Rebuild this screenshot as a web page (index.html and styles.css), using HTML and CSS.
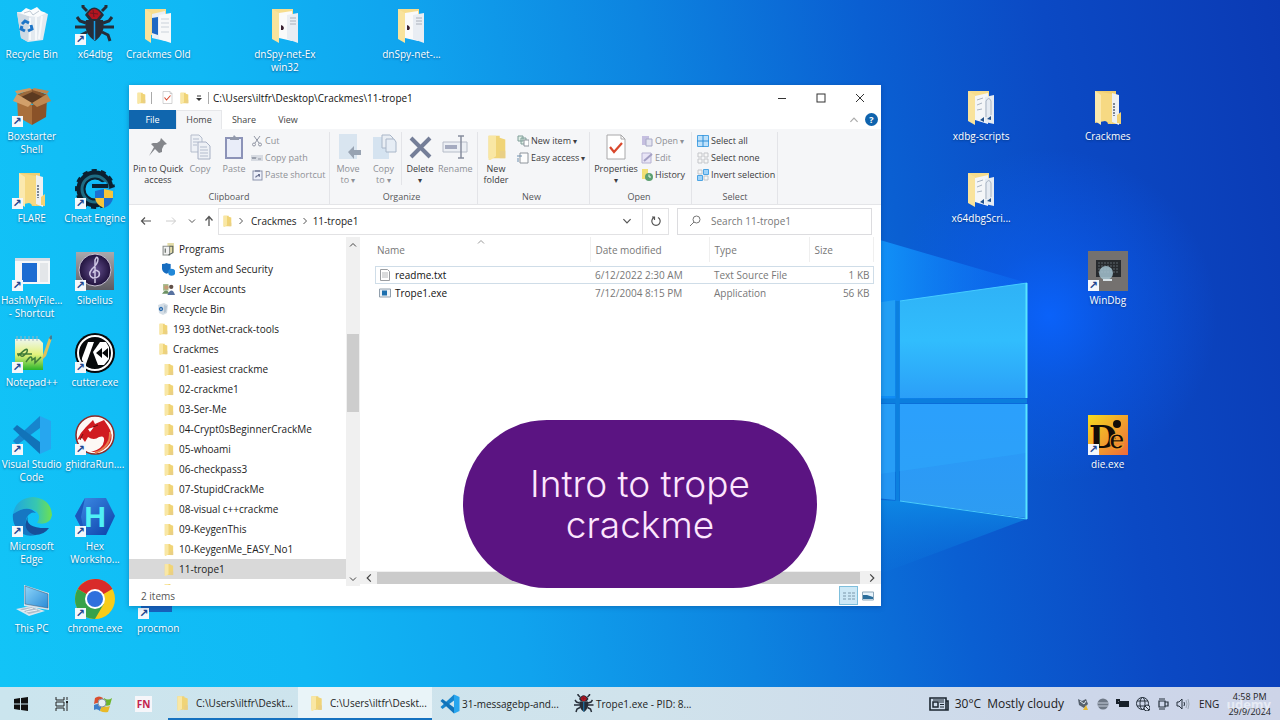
FILE: index.html
```html
<!DOCTYPE html>
<html lang="en">
<head>
<meta charset="utf-8">
<title>Desktop</title>
<link rel="stylesheet" href="styles.css">
</head>
<body>
<svg class="defs" aria-hidden="true">
  <defs>
    <linearGradient id="g-die" x1="0" y1="0" x2="1" y2="1"><stop offset="0" stop-color="#f6dc1e"/><stop offset="1" stop-color="#ee6a3a"/></linearGradient>
    <linearGradient id="g-sib" x1="0" y1="0" x2="0" y2="1"><stop offset="0" stop-color="#a9a9ad"/><stop offset="1" stop-color="#5d5b62"/></linearGradient>
    <radialGradient id="g-orb"><stop offset="0" stop-color="#65508f"/><stop offset="1" stop-color="#20123c"/></radialGradient>
    <linearGradient id="g-note" x1="0" y1="0" x2="0" y2="1"><stop offset="0" stop-color="#eef6ef"/><stop offset=".5" stop-color="#e4f27c"/><stop offset="1" stop-color="#2ab52a"/></linearGradient>
    <linearGradient id="g-edge" x1="0" y1="0" x2="1" y2="0"><stop offset="0" stop-color="#1fa6e0"/><stop offset=".6" stop-color="#37c7b0"/><stop offset="1" stop-color="#6fe04f"/></linearGradient>
    <linearGradient id="g-hex" x1="0" y1="0" x2="1" y2="1"><stop offset="0" stop-color="#3f8fe8"/><stop offset="1" stop-color="#0c3fa8"/></linearGradient>
    <linearGradient id="g-pc" x1="0" y1="0" x2="1" y2="1"><stop offset="0" stop-color="#8fd6fa"/><stop offset="1" stop-color="#2a8bd6"/></linearGradient>
    <linearGradient id="g-pane" x1="0" y1="0" x2="0" y2="1"><stop offset="0" stop-color="#2fb2f6"/><stop offset=".5" stop-color="#31bdfd"/><stop offset="1" stop-color="#2b9ff8"/></linearGradient>
    <linearGradient id="g-pane2" x1="0" y1="0" x2="0" y2="1"><stop offset="0" stop-color="#2a98fb"/><stop offset="1" stop-color="#2d9cf2"/></linearGradient>
    <linearGradient id="g-beam" x1="0" x2="1"><stop offset="0" stop-color="#1296fb" stop-opacity=".9"/><stop offset="1" stop-color="#0f7bff" stop-opacity=".2"/></linearGradient>
    <linearGradient id="g-beam2" x1="0" y1="0" x2="0" y2="1"><stop offset="0" stop-color="#0d8ae6" stop-opacity=".9"/><stop offset="1" stop-color="#0c76dc" stop-opacity=".1"/></linearGradient>

    <symbol id="folder" viewBox="0 0 12 14"><path d="M2 1H8V2L11 3V13H2Z" fill="#f0d477"/><path d="M2 1H6V12L3 14H2Z" fill="#f9e7a4"/><path d="M8 9H11V13H8Z" fill="#e9cf85"/></symbol>

    <symbol id="fold-blue" viewBox="0 0 40 40"><path d="M7 4H28V30H12Z" fill="#f7dd8d"/><path d="M14 9L27 6V36L14 33Z" fill="#e9eff5"/><path d="M14 13L20 12V30L14 28Z" fill="#1d68c4"/><path d="M21 10L33 8V38L21 34Z" fill="#f7f8f9"/><path d="M23 14H31M23 18H31M23 22H31M23 27H31" stroke="#cbd2da" stroke-width="1"/><path d="M7 4L13 8V38L7 34Z" fill="#f9e39c"/></symbol>
    <symbol id="fold-spy" viewBox="0 0 40 40"><path d="M7 4H28V30H12Z" fill="#f7dd8d"/><path d="M14 8L27 6V36L14 33Z" fill="#fafafa"/><path d="M22 10L33 8V38L22 34Z" fill="#e9edf3"/><path d="M25 13H31M25 16H31M25 19H31" stroke="#aab0ba"/><path d="M16 20L18 21L19 23L18 25L16 25Z" fill="#3a2030"/><path d="M7 4L14 8V38L7 34Z" fill="#f9e39c"/></symbol>
    <symbol id="fold-script" viewBox="0 0 40 40"><path d="M7 4H28V30H12Z" fill="#f7dd8d"/><path d="M14 9L27 6V37L14 33Z" fill="#f4f6f8"/><path d="M24 10L33 8V37L24 35Z" fill="#e5ebf2"/><path d="M16 13L22 11M16 18L21 16M16 23L21 22M25 30V14Q28 9 30 14V28" stroke="#a9b4c2" fill="none"/><path d="M19 33L23 30V35ZM26 32L30 29V33Z" fill="#24538c"/><path d="M7 4L14 8V38L7 34Z" fill="#f9e39c"/></symbol>
    <symbol id="fold-zip" viewBox="0 0 40 40"><path d="M7 4H28V8L31 9V27L33 28V37H20Z" fill="#f0ce71"/><path d="M24 6L31 8V38L24 35Z" fill="#eef0f2"/><path d="M26 16V29" stroke="#7d8694" stroke-width="2" stroke-dasharray="2 1"/><path d="M29 28L33 25V36H29Z" fill="#f3d272"/><path d="M7 4L24 7V37L17 34L7 36Z" fill="#f6d983"/><path d="M7 4L13 8V38L7 34Z" fill="#fbe9ae"/></symbol>

    <symbol id="recycle" viewBox="0 0 40 40"><path d="M5 7L31 7L36 9L31 35L16 37L9 33Z" fill="#e3eaf0"/><path d="M5 8L9 33L16 37L17 11Z" fill="#cfdae4"/><path d="M8 8L14 3L19 5L25 2L29 6L34 8L26 12L16 11Z" fill="#fafcfd"/><path d="M12 8L18 6L21 10L27 6" stroke="#bdc9d4" fill="none"/><path d="M18 13V35M24 12V35M30 11L27 34" stroke="#f6f9fb" stroke-width="2"/><g fill="none" stroke="#1d76c8" stroke-width="3"><path d="M10 19L13 16L17 18"/><path d="M19 20L20 24L16 26"/><path d="M13 26L9 24L10 21"/></g></symbol>
    <symbol id="bug" viewBox="0 0 40 40"><g fill="none" stroke="#262d38" stroke-width="3"><path d="M12 6L8 2V0M27 6L31 2V0"/><path d="M11 18L5 16L2 12M28 18L34 16L37 12M11 22H0M28 22H39M12 27L6 30L4 36M27 27L33 30L35 36"/></g><path d="M10 10Q19 -5 29 10L25 15H14Z" fill="#262d38"/><path d="M13 9Q19 -1 26 9L22 14H17Z" fill="#b51420"/><path d="M15 8L23 9M18 5L19 12" stroke="#6d1720"/><path d="M11 15H28Q31 28 20 36Q8 28 11 15Z" fill="#262d38"/><path d="M19.500 16V35" stroke="#189ee8" stroke-width="1.500"/></symbol>
    <symbol id="box" viewBox="0 0 40 40"><path d="M5 11L20 18V38L6 30Z" fill="#a9703c"/><path d="M20 18L35 11L34 30L20 38Z" fill="#8a5228"/><path d="M5 8L20 2L35 8L20 17Z" fill="#5c3a20"/><path d="M5 8L20 2V5L9 10Z" fill="#9c6a3c"/><path d="M35 8L20 2V5L31 10Z" fill="#84532c"/><path d="M5 7L1 14L16 20L20 16Z" fill="#d2a06a"/><path d="M35 7L39 14L25 20L20 16Z" fill="#bf8850"/><path d="M5 7L3 4L18 1L20 3Z" fill="#cf9a62"/><path d="M35 7L37 4L22 1L20 3Z" fill="#bd8650"/></symbol>
    <symbol id="cheat" viewBox="0 0 40 40"><circle cx="20" cy="20" r="14" fill="none" stroke="#0b2030" stroke-width="9"/><circle cx="20" cy="20" r="18" fill="none" stroke="#0b2030" stroke-width="4" stroke-dasharray="5 4"/><circle cx="20" cy="20" r="13" fill="none" stroke="#1e6c84" stroke-width="3"/><path d="M12 14L31 13L34 20L40 18V28H26L22 21Z" fill="#10b3f6"/><path d="M17 15H33V19H17Z" fill="#0b2030"/><path d="M20 22L29 20V29H20Z" fill="#1c6fd0"/><path d="M29 20L38 22V29H29Z" fill="#f6c53c"/><path d="M20 29H29V39Q21 36 20 29Z" fill="#f6c53c"/><path d="M29 29H38Q37 36 29 39Z" fill="#1c6fd0"/></symbol>
    <symbol id="hash" viewBox="0 0 40 40"><rect x="3" y="7" width="35" height="26" fill="#f6f7f8"/><path d="M3 7H38V10H3Z" fill="#d5dde6"/><rect x="10" y="12" width="15" height="19" fill="#1c6cd2"/><rect x="28" y="12" width="8" height="19" fill="#e3e6e9"/></symbol>
    <symbol id="sibelius" viewBox="0 0 40 40"><rect x="1" y="1" width="38" height="38" fill="url(#g-sib)"/><circle cx="20" cy="19" r="16" fill="url(#g-orb)" stroke="#c6c0d2"/><path d="M20 32V9Q22 4 23 8Q23 13 17 18Q12 24 18 27Q26 27 24 21Q20 17 18 22" fill="none" stroke="#cfc7e4" stroke-width="1.500"/></symbol>
    <symbol id="notepad" viewBox="0 0 40 40"><path d="M3 6H27L31 10V37H3Z" fill="url(#g-note)"/><path d="M5 3V8M9 3V8M13 3V8M17 3V8M21 3V8M25 3V8" stroke="#a7b6ba"/><path d="M31 22L37 5L39 2L40 5L34 23L30 27Z" fill="#dfc15a"/><path d="M37 5L39 2L41 4L39 7Z" fill="#3f7c9c"/><path d="M6 23Q17 12 15 19Q9 27 8 20M5 21H20M14 29Q20 20 20 27L23 25V30L29 24" fill="none" stroke="#3e7b38" stroke-width="1.500"/></symbol>
    <symbol id="cutter" viewBox="0 0 40 40"><circle cx="20" cy="20" r="20" fill="#07090b"/><circle cx="20" cy="20" r="17" fill="none" stroke="#fff" stroke-width="2"/><path d="M13 9H19L11 31Q6 28 7 25Z" fill="#fff"/><path d="M18 19L25 9H31L34 14V26L29 32H23Z" fill="#fff"/><path d="M21 20L27 15V25ZM27 20L33 15V25Z" fill="#07090b"/></symbol>
    <symbol id="vscode" viewBox="0 0 40 40"><path d="M28 1L39 6V34L28 39Z" fill="#27a6ef"/><path d="M28 1V13L5 30L1 26Z" fill="#1785cd"/><path d="M28 39V27L5 10L1 14Z" fill="#1173b9"/></symbol>
    <symbol id="dragon" viewBox="0 0 40 40"><circle cx="20" cy="20" r="19" fill="#fdf8f5" stroke="#8d2a28" stroke-width="1.500"/><path d="M2 25Q5 18 11 12L18 5L20 9L29 5L33 11Q39 20 35 28Q29 38 16 37Q28 34 29 26Q30 20 24 22Q19 26 13 22L10 27L7 23Z" fill="#d01b20"/><path d="M13 14L19 12L15 17Z" fill="#fff"/><path d="M35 17Q36 32 20 38" stroke="#e87c4d" fill="none" stroke-width="2"/><path d="M8 19L5 25M18 12L23 10" stroke="#6e1010"/></symbol>
    <symbol id="edge" viewBox="0 0 40 40"><path d="M1 17Q4 1 21 0Q39 2 40 18Q38 29 25 26Q29 20 25 15Q15 7 1 17Z" fill="url(#g-edge)"/><path d="M1 17Q16 7 24 16Q19 14 15 20Q10 31 24 38Q12 41 5 32Q0 25 1 17Z" fill="#1677c2"/><path d="M16 19Q12 32 37 31Q32 38 23 38Q9 34 16 19Z" fill="#174f9a"/></symbol>
    <symbol id="hex" viewBox="0 0 40 40"><path d="M10 1H31L40 19L31 38H10L0 19Z" fill="url(#g-hex)"/><path d="M10 1L6 20L10 38L0 19Z" fill="#1b58bd"/><text x="20" y="30" text-anchor="middle" class="glyph-h">H</text></symbol>
    <symbol id="pc" viewBox="0 0 40 40"><path d="M12 6L37 14V31L12 27Z" fill="#d6e4ee"/><path d="M13 7L36 15V29L13 25Z" fill="url(#g-pc)" stroke="#38536b" stroke-width=".5"/><path d="M4 30L19 27L33 32L17 37Z" fill="#dce6ed"/><path d="M8 30L20 28L29 32L17 35Z" fill="#aebecb"/><path d="M10 32L21 29M14 33L25 31" stroke="#edf3f7"/></symbol>
    <symbol id="chrome" viewBox="0 0 40 40"><circle cx="20" cy="20" r="20" fill="#f9cc18"/><path d="M20 20L2.700 10A20 20 0 0 1 37.300 10Z" fill="#d92b2a"/><path d="M20 10H37.300A20 20 0 0 0 20 0Z" fill="#d92b2a"/><path d="M2.700 10A20 20 0 0 0 20 40L28.700 25L20 20Z" fill="#37a24a"/><circle cx="20" cy="20" r="10" fill="#fff"/><circle cx="20" cy="20" r="8" fill="#2f70dd"/></symbol>
    <symbol id="procmon" viewBox="0 0 40 40"><rect x="3" y="6" width="31" height="27" fill="#1762bd"/></symbol>
    <symbol id="windbg" viewBox="0 0 40 40"><rect width="40" height="40" fill="#74716f"/><rect x="8" y="9" width="25" height="17" fill="#272a2e"/><path d="M10 12H31M10 15H31M10 18H31M10 21H31" stroke="#5f666c" stroke-dasharray="2 1"/><circle cx="18" cy="22" r="7" fill="#a4c2cf" opacity=".85"/><path d="M15 28H24V30H15Z" fill="#d9e3e8"/></symbol>
    <symbol id="die" viewBox="0 0 40 40"><rect width="40" height="40" fill="url(#g-die)"/><text x="1" y="33" class="glyph-d">D</text><text x="21" y="34" class="glyph-e">e</text><circle cx="29" cy="9" r="4" fill="#120c08"/></symbol>

    <symbol id="chev-d" viewBox="0 0 10 10"><path d="M2 3.500L5 6.500L8 3.500" fill="none" stroke="currentColor"/></symbol>
    <symbol id="chev-u" viewBox="0 0 10 10"><path d="M2 6.500L5 3.500L8 6.500" fill="none" stroke="currentColor"/></symbol>
    <symbol id="chev-r" viewBox="0 0 10 10"><path d="M3.500 2L6.500 5L3.500 8" fill="none" stroke="currentColor"/></symbol>
    <symbol id="chev-l" viewBox="0 0 10 10"><path d="M6.500 2L3.500 5L6.500 8" fill="none" stroke="currentColor"/></symbol>
    <symbol id="arrow-l" viewBox="0 0 12 12"><path d="M11 6H1.500M5 2.500L1.500 6L5 9.500" fill="none" stroke="currentColor" stroke-width="1.200"/></symbol>
    <symbol id="arrow-r" viewBox="0 0 12 12"><path d="M1 6H10.500M7 2.500L10.500 6L7 9.500" fill="none" stroke="currentColor"/></symbol>
    <symbol id="arrow-u" viewBox="0 0 12 12"><path d="M6 11V1.500M2.500 5.500L6 1.500L9.500 5.500" fill="none" stroke="currentColor" stroke-width="1.300"/></symbol>
    <symbol id="checkdoc" viewBox="0 0 20 26"><path d="M1 1H15L19 5V25H1Z" fill="#fff" stroke="#a8a8aa"/><path d="M15 1V5H19" fill="none" stroke="#a8a8aa"/><path d="M4 13L8 18L16 9" fill="none" stroke="#d9482d" stroke-width="2.200"/></symbol>
  </defs>
</svg>

<main class="desktop">
  <svg class="wallpaper" viewBox="0 0 1280 720" preserveAspectRatio="none" aria-hidden="true">
    <path d="M880 240L1027 283V400H880Z" fill="url(#g-beam)"/>
    <path d="M880 500L900 501L1027 519L880 574Z" fill="url(#g-beam2)"/>
    <path d="M700 330L895 300V396H700Z" fill="#229ff5"/>
    <path d="M700 404H895V500L700 480Z" fill="#2496f3"/>
    <path d="M900 301L1026 283V398H900Z" fill="url(#g-pane)"/>
    <path d="M900 404H1026V518L900 501Z" fill="url(#g-pane2)"/>
    <path d="M880 474L1026 453V404H880Z" fill="#2fb0ff" opacity=".35"/>
    <path d="M900 301L1027 283" stroke="#45ccff" fill="none"/>
    <path d="M900 501L1027 519" stroke="#4accfb" fill="none"/>
    <path d="M1026.500 283V398M1026.500 404V519" stroke="#58e4ff" stroke-width="2"/>
    <path d="M880 401H1027" stroke="#0b7ede" stroke-width="5"/>
    <path d="M897.500 301V501" stroke="#0c80df" stroke-width="4"/>
  </svg>

  <section class="icons" aria-label="Desktop icons">
    <button class="icon c1 r1"><svg><use href="#recycle"/></svg><span>Recycle Bin</span></button>
    <button class="icon c2 r1 link"><svg><use href="#bug"/></svg><span>x64dbg</span></button>
    <button class="icon c3 r1"><svg><use href="#fold-blue"/></svg><span>Crackmes Old</span></button>
    <button class="icon c5 r1"><svg><use href="#fold-spy"/></svg><span>dnSpy-net-Ex<br>win32</span></button>
    <button class="icon c7 r1"><svg><use href="#fold-spy"/></svg><span>dnSpy-net-...</span></button>
    <button class="icon c1 r2 link"><svg><use href="#box"/></svg><span>Boxstarter<br>Shell</span></button>
    <button class="icon c16 r2"><svg><use href="#fold-script"/></svg><span>xdbg-scripts</span></button>
    <button class="icon c18 r2"><svg><use href="#fold-zip"/></svg><span>Crackmes</span></button>
    <button class="icon c1 r3 link"><svg><use href="#fold-zip"/></svg><span>FLARE</span></button>
    <button class="icon c2 r3 link"><svg><use href="#cheat"/></svg><span>Cheat Engine</span></button>
    <button class="icon c16 r3"><svg><use href="#fold-script"/></svg><span>x64dbgScri...</span></button>
    <button class="icon c1 r4 link"><svg><use href="#hash"/></svg><span>HashMyFile...<br>- Shortcut</span></button>
    <button class="icon c2 r4 link"><svg><use href="#sibelius"/></svg><span>Sibelius</span></button>
    <button class="icon c18 r4 link"><svg><use href="#windbg"/></svg><span>WinDbg</span></button>
    <button class="icon c1 r5 link"><svg><use href="#notepad"/></svg><span>Notepad++</span></button>
    <button class="icon c2 r5 link"><svg><use href="#cutter"/></svg><span>cutter.exe</span></button>
    <button class="icon c1 r6 link"><svg><use href="#vscode"/></svg><span>Visual Studio<br>Code</span></button>
    <button class="icon c2 r6 link"><svg><use href="#dragon"/></svg><span>ghidraRun....</span></button>
    <button class="icon c18 r6 link"><svg><use href="#die"/></svg><span>die.exe</span></button>
    <button class="icon c1 r7 link"><svg><use href="#edge"/></svg><span>Microsoft<br>Edge</span></button>
    <button class="icon c2 r7 link"><svg><use href="#hex"/></svg><span>Hex<br>Worksho...</span></button>
    <button class="icon c1 r8"><svg><use href="#pc"/></svg><span>This PC</span></button>
    <button class="icon c2 r8 link"><svg><use href="#chrome"/></svg><span>chrome.exe</span></button>
    <button class="icon c3 r8 link"><svg><use href="#procmon"/></svg><span>procmon</span></button>
  </section>

  <section class="window" aria-label="File Explorer">
    <header class="titlebar">
      <svg class="i12"><use href="#folder"/></svg><i class="bar"></i>
      <svg class="i14 gap-l"><use href="#checkdoc"/></svg>
      <svg class="i12"><use href="#folder"/></svg>
      <svg class="i10" viewBox="0 0 10 10"><path d="M3 3H7" stroke="#333"/><path d="M2 5H8L5 8Z" fill="#333"/></svg><i class="bar"></i>
      <h1>C:\Users\iltfr\Desktop\Crackmes\11-trope1</h1>
      <div class="winctl">
        <button aria-label="Minimize"><svg viewBox="0 0 10 10"><path d="M1 5.500H9" stroke="#333"/></svg></button>
        <button aria-label="Maximize"><svg viewBox="0 0 10 10"><rect x="1" y="1" width="8" height="8" fill="none" stroke="#333"/></svg></button>
        <button aria-label="Close"><svg viewBox="0 0 10 10"><path d="M1 1L9 9M9 1L1 9" stroke="#333" fill="none"/></svg></button>
      </div>
    </header>
    <nav class="tabs">
      <button class="file">File</button><button class="on">Home</button><button>Share</button><button>View</button>
      <div class="tab-end"><svg class="i12 faint"><use href="#chev-u"/></svg><button class="help" aria-label="Help">?</button></div>
    </nav>

    <div class="ribbon">
      <div class="group g1">
        <div class="tools">
          <button class="big w50"><svg viewBox="0 0 26 26"><path d="M16 4L22 10L19 11L17 15L17 18L14 19L10 15L4 22L9 13L6 10L8 9L12 9L15 7Z" fill="#84868b"/></svg>Pin to Quick<br>access</button>
          <button class="big w33 off"><svg viewBox="0 0 26 26"><path d="M4 1H12L15 4V18H4Z" fill="#eef1f6" stroke="#b5bdcc"/><path d="M11 8H19L23 12V25H11Z" fill="#eef1f6" stroke="#a7b0c4"/><path d="M6 5H12M6 8H11M6 11H10M13 13H20M13 16H21M13 19H21M13 22H21" stroke="#b3bccd"/></svg>Copy</button>
          <button class="big w33 off"><svg viewBox="0 0 26 26"><rect x="5" y="4" width="16" height="20" fill="#e9edf9" stroke="#8c93b8" stroke-width="2"/><path d="M9 6V3H12L13 1L15 3H18V6Z" fill="#9299ab"/></svg>Paste</button>
          <div class="stack">
            <button class="off"><svg viewBox="0 0 12 12"><path d="M3 1L8 8M9 1L4 8" stroke="#9095a3" fill="none"/><circle cx="3" cy="9.500" r="1.500" fill="none" stroke="#9095a3"/><circle cx="9" cy="9.500" r="1.500" fill="none" stroke="#9095a3"/></svg>Cut</button>
            <button class="off"><svg viewBox="0 0 12 12"><path d="M0 3H12V9H0Z" fill="#d7dbe2"/><path d="M1 5L2 7L3 5L4 7L5 5M7 7H10" stroke="#8d93a0" fill="none"/></svg>Copy path</button>
            <button class="off"><svg viewBox="0 0 12 12"><rect x="2" y="2" width="9" height="9" fill="#eceffa" stroke="#8c93ac"/><path d="M4 1H9V3H4Z" fill="#8c93ac"/><path d="M4.500 9V7L7 6V5H9V8L7 7Z" fill="#6c7493"/></svg>Paste shortcut</button>
          </div>
        </div>
        <h2>Clipboard</h2>
      </div>
      <div class="group g2">
        <div class="tools">
          <button class="big off"><svg viewBox="0 0 26 26"><path d="M4 0H22V25H4Z" fill="#d9e5f0"/><path d="M13 18L19 12V16H26V21H19V25Z" fill="#98a3b2"/></svg>Move<br>to <small>▾</small></button>
          <button class="big off rule"><svg viewBox="0 0 26 26"><path d="M2 3H18V25H2Z" fill="#d5e3f0"/><path d="M11 1H19L22 4V14H11Z" fill="#e9eef4" stroke="#a9b6c8"/><path d="M15 5H23L25 8V18H15Z" fill="#e6edf5" stroke="#a9b6c8"/></svg>Copy<br>to <small>▾</small></button>
          <button class="big"><svg viewBox="0 0 26 26"><path d="M4 4L23 23M23 4L4 23" stroke="#747e98" stroke-width="4"/></svg>Delete<br><small>▾</small></button>
          <button class="big w33"><svg viewBox="0 0 26 26"><path d="M1 8H25V18H1Z" fill="#eceff4" stroke="#b6bcc8"/><path d="M3 11H15V15H3Z" fill="#a5abc0"/><path d="M16 2H22M19 2V24M16 24H22" stroke="#868d9d" stroke-width="1.500"/></svg><span class="off">Rename</span></button>
        </div>
        <h2>Organize</h2>
      </div>
      <div class="group g3">
        <div class="tools">
          <button class="big"><svg><use href="#folder"/></svg>New<br>folder</button>
          <div class="stack">
            <button><svg viewBox="0 0 12 12"><path d="M1 1H6V6H1ZM4 3H9V9H4Z" fill="#e0efe6" stroke="#7f9d98"/><path d="M7 5H12V11H7Z" fill="#fff" stroke="#8d949c"/></svg>New item <small>▾</small></button>
            <button><svg viewBox="0 0 12 12"><path d="M3 1H11V11H3Z" fill="#fdfdfd" stroke="#8e949b"/><path d="M0 4H5M1 6V10" stroke="#6c8fae"/></svg>Easy access <small>▾</small></button>
          </div>
        </div>
        <h2>New</h2>
      </div>
      <div class="group g4">
        <div class="tools">
          <button class="big w50"><svg><use href="#checkdoc"/></svg>Properties<br><small>▾</small></button>
          <div class="stack">
            <button class="off"><svg viewBox="0 0 12 12"><path d="M1 1H8V10H1Z" fill="#c5bfe0"/><path d="M5 4H11V11H5Z" fill="#e3e4f0" stroke="#a8a9c6"/></svg>Open <small>▾</small></button>
            <button class="off"><svg viewBox="0 0 12 12"><path d="M1 1H10V11H1Z" fill="#e8e4f6" stroke="#b6b2d2"/><path d="M3 9L11 2" stroke="#a39fc4" stroke-width="2"/></svg>Edit</button>
            <button><svg viewBox="0 0 12 12"><path d="M1 0H7V10H1Z" fill="#f1df75"/><circle cx="8" cy="8" r="4" fill="#5c9f71"/><path d="M8 5.500V8H10" stroke="#e8fff0" fill="none"/></svg>History</button>
          </div>
        </div>
        <h2>Open</h2>
      </div>
      <div class="group g5">
        <div class="tools">
          <div class="stack">
            <button><svg viewBox="0 0 12 12"><path d="M.5 .5H11.500V11.500H.5Z" fill="#bfe1fa" stroke="#4da4e3"/><path d="M6 0V12M0 6H12" stroke="#2f8fd8"/></svg>Select all</button>
            <button><svg viewBox="0 0 12 12"><path d="M1 1H5V5H1ZM7 1H11V5H7ZM1 7H5V11H1ZM7 7H11V11H7Z" fill="#f7f7f7" stroke="#c3c5c9"/></svg>Select none</button>
            <button><svg viewBox="0 0 12 12"><path d="M1 1H5V5H1ZM7 7H11V11H7Z" fill="#f7f7f7" stroke="#c3c5c9"/><path d="M6.500 .5H11.500V5.500H6.500ZM.5 6.500H5.500V11.500H.5Z" fill="#9fd3fa" stroke="#4da4e3"/></svg>Invert selection</button>
          </div>
        </div>
        <h2>Select</h2>
      </div>
    </div>

    <div class="address">
      <div class="navbtns">
        <button aria-label="Back"><svg class="i12"><use href="#arrow-l"/></svg></button>
        <button aria-label="Forward" class="ghost"><svg class="i12"><use href="#arrow-r"/></svg></button>
        <button aria-label="Recent" class="slim"><svg class="i10"><use href="#chev-d"/></svg></button>
        <button aria-label="Up" class="slim"><svg class="i12"><use href="#arrow-u"/></svg></button>
      </div>
      <div class="path">
        <svg class="i12"><use href="#folder"/></svg><svg class="i10 sep"><use href="#chev-r"/></svg>
        <button>Crackmes</button><svg class="i10"><use href="#chev-r"/></svg><button>11-trope1</button>
        <button class="drop" aria-label="Previous locations"><svg class="i12"><use href="#chev-d"/></svg></button>
        <button class="reload" aria-label="Refresh"><svg class="i12" viewBox="0 0 12 12"><path d="M4 2.500A4.200 4.200 0 1 0 8 2.500M4.500 5V2H2" fill="none" stroke="#555" stroke-width="1.200"/></svg></button>
      </div>
      <label class="search"><svg class="i12" viewBox="0 0 12 12"><circle cx="7.500" cy="4.500" r="3.500" fill="none" stroke="#777"/><path d="M5 7L1 11" stroke="#777"/></svg><input type="search" placeholder="Search 11-trope1" aria-label="Search 11-trope1"></label>
    </div>

    <div class="panes">
      <nav class="tree">
        <ul>
          <li class="l2"><button><svg class="i14" viewBox="0 0 12 12"><path d="M5 0H11V9H5Z" fill="#e4dca8"/><path d="M1 3H7V11H1Z" fill="#f2f2f2" stroke="#8a8f8c"/><path d="M3 5V9M7 3H10V9L6 11" stroke="#555e58" fill="none"/></svg>Programs</button></li>
          <li class="l2"><button><svg class="i14" viewBox="0 0 12 12"><path d="M0 1Q3 1 4 0Q6 1 8 1V5Q7 9 4 10Q0 8 0 5Z" fill="#176dc0"/><circle cx="9" cy="8.500" r="3.300" fill="#2188d8"/></svg>System and Security</button></li>
          <li class="l2"><button><svg class="i14" viewBox="0 0 12 12"><path d="M1 1H6V7H1Z" fill="#a3b889"/><circle cx="4" cy="4" r="2" fill="#c69b75"/><path d="M0 10Q4 4 7 10Z" fill="#6d9163"/><circle cx="8.500" cy="3.500" r="2" fill="#625048"/><path d="M5 11Q9 3 12 11Z" fill="#5872a0"/></svg>User Accounts</button></li>
          <li class="l1"><button><svg class="i12" viewBox="0 0 12 12"><path d="M1 2L7 0L11 2L10 10L6 12L2 10Z" fill="#d5dee6"/><path d="M7 2L10 3L9 9L7 10Z" fill="#b7c5d1"/><circle cx="4" cy="6" r="1.500" fill="none" stroke="#2a6cb0" stroke-width="1.300"/></svg>Recycle Bin</button></li>
          <li class="l1"><button><svg class="i12"><use href="#folder"/></svg>193 dotNet-crack-tools</button></li>
          <li class="l1"><button><svg class="i12"><use href="#folder"/></svg>Crackmes</button></li>
          <li class="l2"><button><svg class="i14"><use href="#folder"/></svg>01-easiest crackme</button></li>
          <li class="l2"><button><svg class="i14"><use href="#folder"/></svg>02-crackme1</button></li>
          <li class="l2"><button><svg class="i14"><use href="#folder"/></svg>03-Ser-Me</button></li>
          <li class="l2"><button><svg class="i14"><use href="#folder"/></svg>04-Crypt0sBeginnerCrackMe</button></li>
          <li class="l2"><button><svg class="i14"><use href="#folder"/></svg>05-whoami</button></li>
          <li class="l2"><button><svg class="i14"><use href="#folder"/></svg>06-checkpass3</button></li>
          <li class="l2"><button><svg class="i14"><use href="#folder"/></svg>07-StupidCrackMe</button></li>
          <li class="l2"><button><svg class="i14"><use href="#folder"/></svg>08-visual c++crackme</button></li>
          <li class="l2"><button><svg class="i14"><use href="#folder"/></svg>09-KeygenThis</button></li>
          <li class="l2"><button><svg class="i14"><use href="#folder"/></svg>10-KeygenMe_EASY_No1</button></li>
          <li class="l2 sel"><button><svg class="i14"><use href="#folder"/></svg>11-trope1</button></li>
          <li class="l2"><button><svg class="i14"><use href="#folder"/></svg>12-BratAlphaCrackme1</button></li>
        </ul>
        <div class="vscroll"><svg class="i10"><use href="#chev-u"/></svg><i></i><svg class="i10"><use href="#chev-d"/></svg></div>
      </nav>
      <div class="files">
        <table>
          <colgroup><col class="k1"><col class="k2"><col class="k3"><col class="k4"></colgroup>
          <thead><tr><th>Name<svg class="sort"><use href="#chev-u"/></svg></th><th>Date modified</th><th>Type</th><th>Size</th></tr></thead>
          <tbody>
            <tr class="focus"><td><svg viewBox="0 0 12 12"><path d="M1.500 .5H8.500L10.500 2.500V11.500H1.500Z" fill="#fff" stroke="#9a9da1"/><path d="M3 4H9M3 6H9M3 8H9" stroke="#b5b8bb"/></svg>readme.txt</td><td>6/12/2022 2:30 AM</td><td>Text Source File</td><td>1 KB</td></tr>
            <tr><td><svg viewBox="0 0 12 12"><path d="M.5 2H11.500V10H.5Z" fill="#eef3f7" stroke="#92a0ad"/><path d="M3 3.500H8V8.500H3Z" fill="#1c6fae"/></svg>Trope1.exe</td><td>7/12/2004 8:15 PM</td><td>Application</td><td>56 KB</td></tr>
          </tbody>
        </table>
        <div class="hscroll"><svg class="i12"><use href="#chev-l"/></svg><i></i><svg class="i12"><use href="#chev-r"/></svg></div>
      </div>
    </div>
    <footer class="status"><span>2 items</span>
      <button class="on" aria-label="Details"><svg viewBox="0 0 14 10"><path d="M1 2H4M1 5H4M1 8H4M6 2H9M10 2H13M6 5H9M10 5H13M6 8H9M10 8H13" stroke="#7d98ab"/></svg></button>
      <button aria-label="Large icons"><svg viewBox="0 0 14 10"><path d="M1.500 1H12.500V9H1.500Z" fill="#e8f3fb" stroke="#8fa9bb"/><path d="M2 4L6 4L12 6V8H2Z" fill="#2b6e9c"/></svg></button>
    </footer>
  </section>

  <div class="caption">Intro to trope<br>crackme</div>
</main>

<footer class="taskbar">
  <button class="tb" aria-label="Start"><svg viewBox="0 0 14 14"><path d="M0 2L6 1V6.500H0ZM7 1L14 0V6.500H7ZM0 7.500H6V13L0 12ZM7 7.500H14V14L7 13Z" fill="#111"/></svg></button>
  <button class="tb" aria-label="Task view"><svg viewBox="0 0 14 14"><path d="M1 0V3H9V0M1 5H9V9H1ZM1 14V11H9V14M12 0V3M12 6V14" fill="none" stroke="#222"/><path d="M11 4H13V6H11Z" fill="#222"/></svg></button>
  <button class="tb" aria-label="Classic shell"><svg class="s18" viewBox="0 0 18 18"><path d="M1 3Q5 0 9 3L7 9Q4 7 0 9Z" fill="#d94f30"/><path d="M10 3Q14 6 18 3L16 10Q12 12 8 9Z" fill="#6fb52d"/><path d="M0 10Q4 8 8 10L6 16Q3 13 0 15Z" fill="#3f7fc9"/><path d="M8 10Q12 13 16 11L14 17Q10 18 6 16Z" fill="#e9b928"/><circle cx="8" cy="8" r="4" fill="#e8eff5" stroke="#8796a5"/></svg></button>
  <button class="tb" aria-label="FN"><b class="fn">FN</b></button>
  <button class="app run first"><svg class="fo"><use href="#folder"/></svg><span>C:\Users\iltfr\Deskt...</span></button>
  <button class="app run active"><svg class="fo"><use href="#folder"/></svg><span>C:\Users\iltfr\Deskt...</span></button>
  <button class="app tight"><svg><use href="#vscode"/></svg><span>31-messagebp-and...</span></button>
  <button class="app tight"><svg><use href="#bug"/></svg><span>Trope1.exe - PID: 8...</span></button>
  <div class="tray">
    <button class="weather"><svg viewBox="0 0 20 14"><path d="M1 1H17V13H1ZM17 4H19V13H3" fill="none" stroke="#1b2630" stroke-width="1.600"/><path d="M4 5H9V10H4Z" fill="none" stroke="#1b2630" stroke-width="1.500"/><path d="M10 5H15M11 7.500H15M11 10H15M4 3H15" stroke="#1b2630"/></svg><span>30°C</span><span>Mostly cloudy</span></button>
    <div class="sys">
      <svg viewBox="0 0 14 14"><path d="M2 2L6 4L10 2L12 7L8 11L3 8Z" fill="#56616e"/><path d="M4 4L8 7L10 4" stroke="#dfe8ef" fill="none"/><path d="M7 13L10 8L12 13Z" fill="#e6b936"/></svg>
      <svg viewBox="0 0 14 14"><circle cx="7" cy="7" r="5.500" fill="#6e7886"/><path d="M2 6H12M2 9H12" stroke="#c4cddb"/></svg>
      <svg viewBox="0 0 14 14"><path d="M3 4H13V10H3Z" fill="#17202a"/><path d="M0 3H4M1 3V6H4" stroke="#17202a" stroke-width="2"/></svg>
      <svg viewBox="0 0 14 14"><g fill="none" stroke="#26313d"><circle cx="6.500" cy="6.500" r="6"/><ellipse cx="6.500" cy="6.500" rx="2.500" ry="6"/><path d="M1 4H12M1 9H12"/></g><circle cx="11" cy="11" r="3" fill="#d5deed" stroke="#26313d"/><path d="M9 9L13 13" stroke="#26313d"/></svg>
      <svg viewBox="0 0 14 14"><path d="M3 4H9V10H3ZM9 5H12V9H9ZM3 2H9M3 12H9" fill="none" stroke="#26313d" stroke-width="1.200"/></svg>
      <svg viewBox="0 0 14 14"><path d="M1 5H3L6 2V12L3 9H1Z" fill="none" stroke="#26313d"/><path d="M8 5Q9 7 8 9" stroke="#26313d" fill="none"/><path d="M10 3Q12 7 10 11M12 2Q14 7 12 12" stroke="#9ba6b4" fill="none"/></svg>
    </div>
    <span class="lang">ENG</span>
    <div class="clock"><time>4:58 PM</time><time>29/9/2024</time><em>udemy</em></div>
  </div>
</footer>
</body>
</html>
```
FILE: styles.css
```css
* { box-sizing: border-box; }
html, body { height: 100%; }
body { margin: 0; font-family: "Open Sans", "Noto Sans", sans-serif; font-size: 10px; color: #222; display: flex; flex-direction: column; overflow: hidden; }
button { font: inherit; color: inherit; background: none; border: 0; padding: 0; margin: 0; }
h1, h2, ul { margin: 0; padding: 0; font-weight: 400; list-style: none; }
svg { display: block; flex: none; text-shadow: none; }
small { font-size: 8px; line-height: 8px; }
.defs { position: absolute; width: 0; height: 0; }
.i10 { width: 10px; height: 10px; }
.i12 { width: 12px; height: 12px; }
.i14 { width: 13px; height: 13px; }
.faint { color: #aaa; }
.glyph-h { font: 700 30px "Liberation Sans", sans-serif; fill: #4ff0f6; }
.glyph-d { font: 700 32px "DejaVu Serif", serif; fill: #120c08; }
.glyph-e { font: 700 28px "Liberation Sans", sans-serif; fill: #120c08; stroke: #f2a02c; stroke-width: 1px; }

.desktop {
  flex: 1; min-height: 0; position: relative; overflow: hidden;
  background:
    radial-gradient(circle at 82% 46%, rgba(10, 100, 255, .9), rgba(10, 95, 245, .5) 6%, rgba(10, 80, 230, 0) 15%),
    linear-gradient(80deg, #12c4f7 0%, #10b8f5 22%, #10a3ee 38%, #0d84e0 54%, #0a5fd2 70%, #0b49c4 83%, #0b3ab4 100%);
}
.wallpaper { position: absolute; left: 0; top: 0; width: 100vw; height: 100vh; }

.icons { position: relative; display: grid; grid-template-columns: repeat(20, minmax(0, 1fr)); grid-auto-rows: 82px; padding-right: 14px; }
.icon { position: relative; display: flex; flex-direction: column; align-items: center; gap: 3px; padding-top: 5px; color: #fff; font-size: 10px; line-height: 13px; white-space: nowrap; text-shadow: 0 1px 2px rgba(0, 40, 90, .6); }
.icon svg { width: 40px; height: 40px; }
.link::before { content: "↗"; position: absolute; left: calc(50% - 20px); top: 34px; width: 11px; height: 11px; background: #f4f7fb; color: #21458f; font: 700 11px/11px "DejaVu Sans", sans-serif; text-shadow: none; text-align: center; }
.c1 { grid-column: 1; } .c2 { grid-column: 2; } .c3 { grid-column: 3; } .c5 { grid-column: 5; } .c7 { grid-column: 7; } .c16 { grid-column: 16; } .c18 { grid-column: 18; }
.r1 { grid-row: 1; } .r2 { grid-row: 2; } .r3 { grid-row: 3; } .r4 { grid-row: 4; } .r5 { grid-row: 5; } .r6 { grid-row: 6; } .r7 { grid-row: 7; } .r8 { grid-row: 8; }

.window { position: absolute; left: 129px; top: 85px; width: 752px; height: 521px; background: #fff; display: flex; flex-direction: column; box-shadow: 0 1px 5px rgba(0, 40, 100, .35); }
.titlebar { height: 25px; display: flex; align-items: center; gap: 4px; padding-left: 6px; }
.titlebar .bar { width: 1px; height: 12px; background: #aaa; }
.titlebar .gap-l { margin-left: 5px; }
.titlebar h1 { font-size: 10px; color: #111; flex: 1; }
.winctl { display: flex; padding-right: 2px; }
.winctl button { width: 39px; height: 25px; display: grid; place-items: center; }
.winctl svg { width: 10px; height: 10px; }
.tabs { height: 19px; display: flex; font-size: 9px; color: #444; }
.tabs > button { width: 44px; }
.tabs .file { background: #1066ae; color: #fff; width: 47px; }
.tabs .on { background: #f5f6f8; box-shadow: inset 1px 1px #e6e7ea, inset -1px 0 #e6e7ea; width: 46px; }
.tab-end { margin-left: auto; display: flex; align-items: center; gap: 5px; padding-right: 3px; }
.help { width: 13px; height: 13px; border-radius: 50%; background: #0f63ad; color: #fff; font-weight: 700; line-height: 13px; }

.ribbon { height: 76px; background: #f5f6f8; border-bottom: 1px solid #e4e5e8; display: flex; font-size: 9px; line-height: 11px; color: #3c3c40; padding-top: 3px; }
.group { display: flex; flex-direction: column; border-right: 1px solid #e3e4e8; flex: none; }
.group h2 { font-size: 9px; line-height: 13px; text-align: center; margin-top: auto; padding-bottom: 1px; color: #55565a; }
.g1 { width: 201px; padding-left: 4px; } .g2 { width: 148px; } .g3 { width: 112px; } .g4 { width: 102px; padding-left: 1px; } .g5 { width: 86px; padding-left: 5px; }
.group h2 { padding-right: 4px; }
.tools { display: flex; align-items: flex-start; }
.big { position: relative; width: 36px; text-align: center; white-space: nowrap; flex: none; padding-top: 2px; }
.big svg { width: 26px; height: 26px; margin: 0 auto 3px; }
.w50 { width: 50px; } .w33 { width: 34px; }
.rule { border-right: 1px solid #e3e4e8; }
.off { color: #8e9096; }
.stack { display: flex; flex-direction: column; }
.g3 .stack { padding-left: 3px; }
.stack button { height: 17px; display: flex; align-items: center; gap: 2px; white-space: nowrap; }
.stack svg { width: 12px; height: 12px; }

.address { height: 32px; display: flex; align-items: center; color: #555; }
.navbtns { display: flex; width: 89px; padding-left: 4px; flex: none; }
.navbtns button { width: 25px; display: grid; place-items: center; }
.navbtns .slim { width: 17px; }
.navbtns .ghost { color: #ccc; }
.path { flex: 1; height: 27px; border: 1px solid #e2e2e4; display: flex; align-items: center; gap: 3px; padding-left: 2px; color: #555; }
.path button { color: #222; }
.path .sep { margin-right: 2px; }
.path .drop { margin-left: auto; width: 24px; display: grid; place-items: center; color: #555; }
.path .reload { width: 26px; height: 25px; border-left: 1px solid #e2e2e4; display: grid; place-items: center; }
.search { width: 195px; height: 27px; margin: 0 9px 0 8px; border: 1px solid #dcdcdf; display: flex; align-items: center; gap: 10px; padding-left: 11px; }
.search input { border: 0; outline: 0; width: 100%; min-width: 0; background: none; font: inherit; padding: 0; }
.search input::placeholder { color: #777; opacity: 1; }

.panes { flex: 1; min-height: 0; display: flex; }
.tree { width: 231px; display: flex; flex: none; }
.tree ul { flex: 1; overflow: hidden; padding-top: 2px; margin-bottom: 1px; }
.tree button { height: 20px; width: 100%; display: flex; align-items: center; gap: 4px; color: #222; white-space: nowrap; text-align: left; }
.l1 { padding-left: 28px; } .l2 { padding-left: 33px; }
.sel { background: #d9d9d9; }
.vscroll { width: 14px; background: #f0f0f0; display: flex; flex-direction: column; align-items: center; color: #444; padding: 3px 0 2px; }
.vscroll i { width: 12px; height: 78px; background: #cdcdcd; margin: 84px 0 auto; }
.files { flex: 1; min-width: 0; display: flex; flex-direction: column; padding-left: 15px; }
table { table-layout: fixed; width: 499px; border-collapse: collapse; color: #777; }
.k1 { width: 215px; } .k2 { width: 119px; } .k3 { width: 100px; }
th { font-weight: 400; text-align: left; padding: 1px 5px 0; height: 25px; border-right: 1px solid #efefef; position: relative; }
th:first-child { padding-left: 2px; }
.sort { position: absolute; left: 101px; top: 0; width: 10px; height: 10px; color: #999; }
thead::after { content: ""; display: block; height: 4px; }
td { height: 18px; padding: 0 4px 0 5px; white-space: nowrap; }
td:first-child { color: #111; padding-left: 4px; }
td:last-child { text-align: right; }
td svg { width: 12px; height: 12px; display: inline-block; vertical-align: -2px; margin-right: 4px; }
.focus { outline: 1px solid #cfdde8; outline-offset: -1px; }
.hscroll { margin: auto 0 2px -15px; height: 13px; background: #f0f0f0; display: flex; align-items: center; color: #444; padding: 0 3px; gap: 2px; }
.hscroll i { flex: 1; height: 12px; background: #cbcbcb; margin-right: 4px; }
.status { height: 20px; display: flex; align-items: center; padding: 0 4px 1px 12px; color: #555; }
.status span { flex: 1; }
.status button { width: 19px; height: 19px; display: grid; place-items: center; }
.status .on { background: #cce8f6; border: 1px solid #7fbfdc; }
.status svg { width: 14px; height: 10px; }

.caption { position: absolute; left: 50%; top: 420px; transform: translateX(-50%); padding: 43px 64px; width: 354px; border-radius: 84px; background: #5b1482; color: #fde6fd; text-align: center; white-space: nowrap; font: 300 37px/41px "Inter", sans-serif; }

.taskbar { height: 33px; flex: none; display: flex; background: linear-gradient(90deg, #cbe5ee, #d0e3ec 50%, #cdd7ea 85%, #cdd4e8); color: #222; }
.tb { width: 41px; display: grid; place-items: center; }
.tb svg { width: 14px; height: 14px; }
.tb .s18 { width: 18px; height: 18px; }
.fn { background: #f6f6fa; color: #c3244e; font-size: 10px; line-height: 16px; width: 17px; }
.app { width: 134px; display: flex; align-items: center; gap: 7px; padding-left: 8px; white-space: nowrap; }
.app svg { width: 20px; height: 20px; }
.app .fo { width: 14px; height: 16px; }
.run { width: 130px; border-bottom: 2px solid #1672c0; padding-left: 7px; }
.first { margin-left: 4px; }
.active { background: #e9f4f8; width: 134px; padding-left: 11px; }
.tight { gap: 2px; }
.tray { margin-left: auto; display: flex; align-items: center; gap: 9px; padding-right: 9px; }
.weather { display: flex; align-items: center; gap: 6px; font-size: 12px; }
.weather svg { width: 20px; height: 14px; }
.sys { display: flex; gap: 6px; padding-left: 3px; }
.sys svg { width: 14px; height: 14px; }
.clock { position: relative; display: grid; text-align: center; font-size: 9px; line-height: 15px; }
.clock em { position: absolute; right: 0; top: 7px; font: 700 13px/16px "Open Sans", sans-serif; color: rgba(255, 255, 255, .55); }
```
